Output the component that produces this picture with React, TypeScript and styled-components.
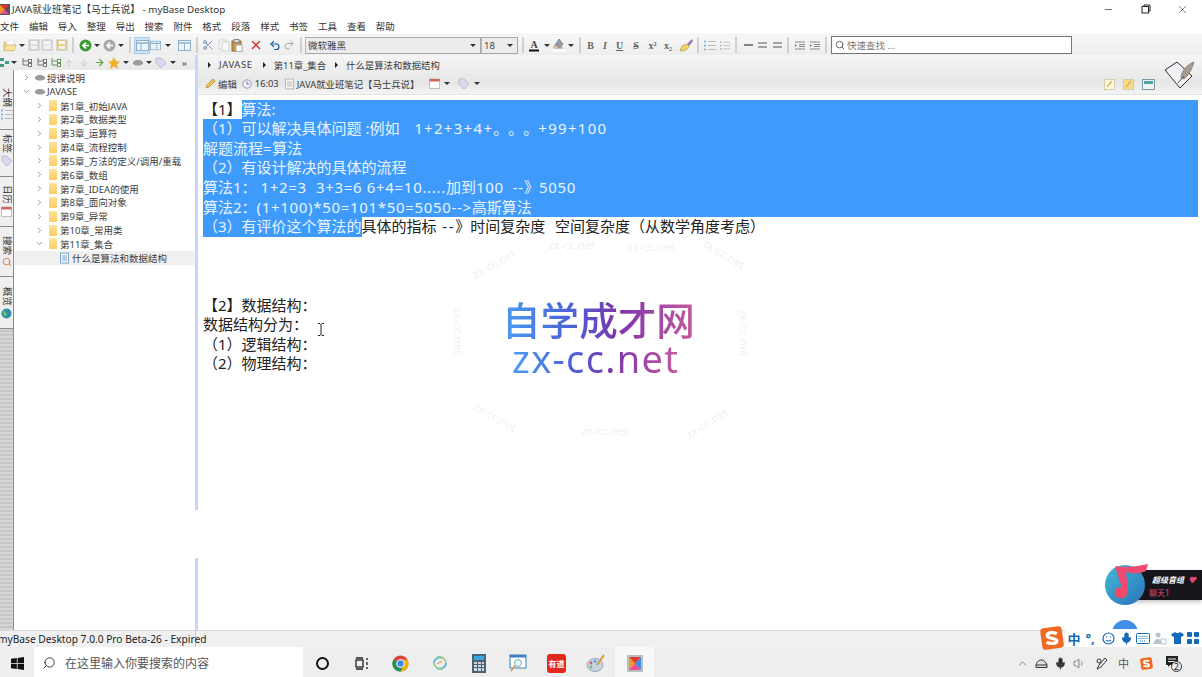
import React from 'react';
import styled, { createGlobalStyle } from 'styled-components';
import { Search, Scissors, Undo2, Redo2, Minus, X, ChevronRight, ChevronDown, ChevronUp, Mic, Volume1, ArrowUp, ArrowDown, ArrowRight } from 'lucide-react';

const GlobalStyle = createGlobalStyle`
  html, body, #root {
    margin: 0;
    width: 1202px;
    height: 677px;
    overflow: hidden;
  }
  body {
    background: #fff;
    font-family: "Noto Sans", "Noto Sans CJK SC", sans-serif;
    color: #333;
    text-spacing-trim: space-all;
  }
`;

const Shell = styled.div`
  position: relative;
  display: flex;
  flex-direction: column;
  width: 1202px;
  height: 677px;
  overflow: hidden;
`;

/* title + menu */
const TitleBar = styled.div`
  display: flex;
  align-items: center;
  height: 18px;
  background: #fff;
  font-size: 9.8px;
  color: #333;
`;
const TitleIcon = styled.svg`
  width: 11px;
  height: 11px;
  margin: 0 2px 0 -1px;
  flex: none;
`;
const TitleText = styled.span`
  flex: 1;
  white-space: pre;
`;
const WinButtons = styled.div`
  display: flex;
  align-items: center;
  padding-right: 1px;
`;
const WinButton = styled.div`
  display: flex;
  justify-content: center;
  align-items: center;
  width: 37px;
  color: #222;
`;
const MenuBar = styled.div`
  display: flex;
  gap: 9.9px;
  height: 16px;
  align-items: center;
  background: #fff;
  font-size: 9.5px;
  color: #333;
`;

/* main toolbar */
const ToolBar = styled.div`
  display: flex;
  align-items: center;
  height: 21px;
  padding-left: 3px;
  background: linear-gradient(#f7f7f7, #ededed);
  border-top: 1px solid #f0f0f0;
  box-sizing: border-box;
`;
const Tool = styled.div<{ $w: number; $active?: boolean }>`
  display: flex;
  justify-content: center;
  align-items: center;
  flex: none;
  width: ${(p) => p.$w}px;
  height: 17px;
  box-sizing: border-box;
  font-family: "Liberation Serif", serif;
  font-size: 10px;
  font-weight: 700;
  color: #666;
  ${(p) => p.$active && 'background: #cfe3f7; border: 1px solid #a9c9e8;'}
`;
const Drop = styled.i`
  width: 0;
  height: 0;
  border-left: 3px solid transparent;
  border-right: 3px solid transparent;
  border-top: 3px solid #333;
`;
const Dots = styled.div<{ $w: number }>`
  flex: none;
  width: ${(p) => p.$w}px;
  height: 16px;
  background: radial-gradient(circle at center, #aaa 0.6px, transparent 0.8px) center top / 2px 2px repeat-y;
`;
const Picker = styled.div<{ $w: number }>`
  display: flex;
  align-items: center;
  justify-content: space-between;
  flex: none;
  width: ${(p) => p.$w}px;
  height: 17px;
  padding: 0 4px 0 2px;
  box-sizing: border-box;
  background: #ececec;
  border: 1px solid #aaa;
  border-left-color: #b8b8b8;
  font-size: 9.5px;
  color: #444;
`;
const FindBox = styled.div`
  display: flex;
  align-items: center;
  gap: 2px;
  width: 241px;
  height: 18px;
  margin-left: 1px;
  padding-left: 3px;
  box-sizing: border-box;
  background: #fff;
  border: 1px solid #777;
  font-size: 9.5px;
  color: #777;
`;

/* main area */
const Main = styled.div`
  display: flex;
  flex: 1;
  min-height: 0;
`;
const LeftPane = styled.div`
  display: flex;
  flex-direction: column;
  width: 195px;
  flex: none;
`;
const TreeBar = styled.div`
  display: flex;
  align-items: center;
  height: 15px;
  background: linear-gradient(#f1f1f1, #e9e9e9);
`;
const LeftBody = styled.div`
  display: flex;
  flex: 1;
  min-height: 0;
`;
const Rail = styled.div`
  display: flex;
  flex-direction: column;
  width: 13px;
  flex: none;
  border-right: 1px solid #8c8c8c;
  background: repeating-linear-gradient(#c6c6c6 0 2px, #d6d6d6 2px 4px);
`;
const RailTab = styled.div<{ $h: number }>`
  display: flex;
  flex-direction: column;
  align-items: center;
  justify-content: flex-end;
  gap: 2px;
  height: ${(p) => p.$h}px;
  padding-bottom: 9px;
  box-sizing: border-box;
  background: #efefef;
  border-bottom: 1px solid #8c8c8c;
  font-size: 9.5px;
  line-height: 12px;
  color: #333;
`;
const RailLabel = styled.span`
  writing-mode: vertical-rl;
  text-orientation: sideways;
  white-space: pre;
`;
const Tree = styled.div`
  flex: 1;
  background: #fff;
  padding-top: 1px;
`;
const TreeRow = styled.div<{ $pad: number; $selected?: boolean }>`
  display: flex;
  align-items: center;
  height: 13.83px;
  padding-left: ${(p) => p.$pad}px;
  font-size: 9.5px;
  white-space: pre;
  color: #3c3c3c;
  background: ${(p) => (p.$selected ? '#f0f0f0' : 'transparent')};
`;
const Arrow = styled.span`
  display: flex;
  justify-content: center;
  width: 11px;
  flex: none;
  color: #777;
`;
const RowIcon = styled.span`
  display: flex;
  justify-content: center;
  width: 13px;
  margin: 0 1px 0 1px;
  flex: none;
`;
const Folder = styled.i`
  width: 8px;
  height: 11px;
  background: linear-gradient(#fde49a, #fbcd62);
  border-radius: 1px;
`;
const Splitter = styled.div`
  width: 3px;
  flex: none;
  background: linear-gradient(#c6d6fa 0 455px, #fff 455px 503px, #c6d6fa 503px);
`;

/* editor */
const EditorPane = styled.div`
  display: flex;
  flex-direction: column;
  flex: 1;
  min-width: 0;
`;
const EditorHead = styled.div`
  position: relative;
  height: 39px;
  flex: none;
  background: linear-gradient(#f6f6f6, #e6e6e6 70%, #f4f4f4);
  border-bottom: 1px solid #e2e2e2;
  font-size: 9.4px;
  color: #3a3a3a;
`;
const HeadRow = styled.div`
  display: flex;
  align-items: center;
  height: 19px;
  white-space: pre;
`;
const CrumbMark = styled.i<{ $left: number }>`
  width: 0;
  height: 0;
  margin-left: ${(p) => p.$left}px;
  margin-right: 8px;
  border-top: 3px solid transparent;
  border-bottom: 3px solid transparent;
  border-left: 3px solid #222;
`;
const CrumbWide = styled.span`
  letter-spacing: 0.65px;
`;
const HeadIcon = styled.span<{ $left: number; $right?: number }>`
  display: flex;
  margin-left: ${(p) => p.$left}px;
  margin-right: ${(p) => p.$right ?? 0}px;
`;
const HeadTools = styled.div`
  position: absolute;
  right: 6px;
  top: 5px;
  display: flex;
  align-items: flex-end;
  gap: 7px;
`;
const QuillSlot = styled.span`
  display: flex;
  margin-left: 2px;
`;
const Sheet = styled.div`
  position: relative;
  flex: 1;
  padding: 4.6px 4px 0 5px;
  background: #fff;
  font-size: 15px;
  line-height: 18.4px;
  color: #222;
`;
const Line = styled.div`
  display: flex;
  height: 19.6px;
  white-space: pre;
`;
const Picked = styled.span<{ $fill?: boolean }>`
  background: #3f9bfb;
  color: #e8f3ff;
  ${(p) => p.$fill && 'flex: 1;'}
`;
const Lat = styled.span<{ $s?: number }>`
  letter-spacing: ${(p) => p.$s ?? 0.68}px;
`;
const Mark = styled.span<{ $x: number; $y: number; $r: number }>`
  position: absolute;
  left: ${(p) => p.$x}px;
  top: ${(p) => p.$y}px;
  transform: translate(-50%, -50%) rotate(${(p) => p.$r}deg);
  font-size: 11.5px;
  line-height: 14px;
  color: #f1f1f1;
  white-space: pre;
`;
const BrandCn = styled.div`
  position: absolute;
  left: 304px;
  top: 206px;
  font-size: 38.6px;
  font-weight: 500;
  line-height: 39px;
  white-space: pre;
  color: transparent;
  background: linear-gradient(90deg, #4a9df0 0%, #4a63d8 35%, #7d35ad 60%, #c45a9e 100%);
  -webkit-background-clip: text;
  background-clip: text;
`;
const BrandEn = styled(BrandCn)`
  left: 314px;
  top: 245px;
  font-family: "Noto Sans", sans-serif;
  font-size: 38px;
  font-weight: 400;
  line-height: 36px;
  letter-spacing: 1.3px;
`;
const TextCursor = styled.svg`
  position: absolute;
  left: 120px;
  top: 228px;
`;

/* status + taskbar */
const StatusBar = styled.div`
  height: 17px;
  flex: none;
  display: flex;
  align-items: center;
  background: #f0f0f0;
  border-top: 1px solid #d8d8d8;
  box-sizing: border-box;
`;
const StatusText = styled.div`
  width: 197px;
  margin-left: -2px;
  flex: none;
  font-size: 10.2px;
  line-height: 16px;
  white-space: pre;
  color: #222;
  border-right: 1px solid #c8c8c8;
`;
const TaskBar = styled.div`
  display: flex;
  align-items: center;
  height: 30px;
  flex: none;
  padding-top: 2px;
  box-sizing: border-box;
  background: #eeeeee;
`;
const StartBtn = styled.div`
  display: flex;
  justify-content: center;
  align-items: center;
  width: 34px;
  flex: none;
`;
const TaskSearch = styled.div`
  display: flex;
  align-items: center;
  gap: 9px;
  width: 269px;
  height: 30px;
  margin-top: -2px;
  padding: 2px 0 0 8px;
  box-sizing: border-box;
  flex: none;
  background: #fff;
  font-size: 12px;
  color: #555;
`;
const SearchGlass = styled.span`
  display: flex;
  transform: scaleX(-1);
`;
const TaskApps = styled.div`
  display: flex;
  flex: none;
`;
const TaskApp = styled.div<{ $active?: boolean }>`
  display: flex;
  justify-content: center;
  align-items: center;
  width: 39px;
  height: 30px;
  margin-top: -2px;
  padding-top: 2px;
  box-sizing: border-box;
  background: ${(p) => (p.$active ? '#f8f8f8' : 'transparent')};
`;
const Tray = styled.div`
  display: flex;
  align-items: center;
  margin-left: auto;
  padding-right: 13px;
  color: #333;
`;
const TraySlot = styled.div<{ $w: number }>`
  display: flex;
  justify-content: center;
  align-items: center;
  width: ${(p) => p.$w}px;
  font-size: 11px;
  color: #555;
`;

/* things lying over the window */
const ImeBar = styled.div`
  position: absolute;
  right: 0;
  top: 629px;
  display: flex;
  align-items: center;
  width: 137px;
  height: 18px;
  background: #fff;
  color: #1668b8;
  font-size: 13px;
  font-weight: 700;
`;
const ImeSlot = styled.div<{ $w: number }>`
  display: flex;
  justify-content: center;
  align-items: center;
  width: ${(p) => p.$w}px;
  flex: none;
`;
const ImeLogo = styled.svg`
  position: absolute;
  left: -25px;
  top: -3px;
`;
const Pill = styled.div`
  position: absolute;
  left: 1125px;
  top: 570px;
  width: 77px;
  height: 30px;
  padding: 3px 0 0 24px;
  box-sizing: border-box;
  background: #15151b;
  border-radius: 6px 0 0 6px;
  box-shadow: 0 2px 4px rgba(0, 0, 0, 0.25);
  font-size: 8px;
  line-height: 13px;
  white-space: pre;
`;
const PillTitle = styled.div`
  display: flex;
  gap: 4px;
  padding-left: 3px;
  color: #fff;
  font-style: italic;
  font-weight: 700;
`;
const PillHeart = styled.span`
  color: #e0496e;
`;
const PillSub = styled.div`
  color: #e0496e;
`;
const MusicDisc = styled.svg`
  position: absolute;
  left: 1103px;
  top: 562px;
`;
const BlueDot = styled.div`
  position: absolute;
  left: 1112px;
  top: 620px;
  width: 26px;
  height: 26px;
  border-radius: 50%;
  background: #3f8fe8;
`;

/* small drawings */
const DocIcon = ({ c = '#b9b9b9' }: { c?: string }) => (
  <svg width="11" height="12" viewBox="0 0 11 12">
    <rect x="1.5" y="1" width="8" height="10" fill="#f4f4f4" stroke={c} />
    <path d="M3 4h5M3 6h5M3 8h5" stroke={c} />
  </svg>
);
const FolderOpen = () => (
  <svg width="15" height="14" viewBox="0 0 15 14">
    <path d="M1 4h5l1 1h4v8H1z" fill="#f5d27e" stroke="#d8bb78" />
    <path d="M4 3l5-2 3 2v5H4z" fill="#fff" stroke="#ddd" />
    <path d="M1 13l2-6h11l-2 6z" fill="#fbe3a3" stroke="#d8bb78" />
  </svg>
);
const Disk = ({ tint = '#dcdcdc' }: { tint?: string }) => (
  <svg width="12" height="12" viewBox="0 0 12 12">
    <rect x="1" y="1" width="10" height="10" fill={tint} stroke="#c0c0c0" />
    <rect x="3" y="2" width="6" height="3" fill="#f6f6f6" />
    <rect x="3" y="7" width="6" height="3" fill="#f3f3f3" />
  </svg>
);
const RoundArrow = ({ c }: { c: string }) => (
  <svg width="13" height="13" viewBox="0 0 13 13">
    <circle cx="6.5" cy="6.5" r="6" fill={c} />
    <path d="M10 6.5H5M7 3.7L4 6.5l3 2.8" fill="none" stroke="#fff" strokeWidth="1.6" />
  </svg>
);
const Panes = ({ v }: { v: number }) => (
  <svg width="13" height="11" viewBox="0 0 13 11">
    <rect x="0.5" y="0.5" width="12" height="10" fill="#eef5fb" stroke="#8fb0c9" />
    <path d="M.5 3h12" stroke="#8fb0c9" strokeWidth="1.5" />
    <path d={`M${v} 3v7`} stroke="#8fb0c9" />
  </svg>
);
const CopySheets = () => (
  <svg width="12" height="13" viewBox="0 0 12 13">
    <rect x="1" y="1" width="7" height="9" fill="#fafafa" stroke="#d0d0d0" />
    <rect x="4" y="3" width="7" height="9" fill="#fafafa" stroke="#d0d0d0" />
  </svg>
);
const Paste = () => (
  <svg width="12" height="13" viewBox="0 0 12 13">
    <rect x="1" y="2" width="9" height="10" fill="#c9964a" stroke="#8d6a35" />
    <rect x="3" y="0.5" width="5" height="3" fill="#ddd" stroke="#888" />
    <rect x="5" y="6" width="6" height="6.5" fill="#fff" stroke="#aaa" />
  </svg>
);
const Bucket = () => (
  <svg width="12" height="14" viewBox="0 0 12 14">
    <path d="M6 1l4 5-3 4-5-3z" fill="#9b9bb0" stroke="#666" strokeWidth=".6" />
    <path d="M2 7c-1 1-1 2-1 3h9" fill="none" stroke="#b86" />
    <rect y="11" width="12" height="3" fill="#fff" />
  </svg>
);
const Brush = () => (
  <svg width="15" height="14" viewBox="0 0 15 14">
    <path d="M13 1L8 6l2 2 4-5z" fill="#8a7ab0" />
    <path d="M8 6L3 8l-2 5c4 0 8-1 9-5z" fill="#f1d470" stroke="#a68c35" strokeWidth=".6" />
  </svg>
);
const ListLines = ({ dots }: { dots?: boolean }) => (
  <svg width="12" height="11" viewBox="0 0 12 11">
    <path d="M4 1.5h8M4 5.5h8M4 9.5h8" stroke="#bbb" />
    <path d="M1 .5v2M1 4.500v2M1 8.500v2" stroke={dots ? '#8ab' : '#6a9fd0'} strokeWidth="1.4" />
  </svg>
);
const Bars = ({ n }: { n: number }) => (
  <svg width="11" height="8" viewBox="0 0 11 8">
    {n === 1 ? <path d="M1 4h9" stroke="#555" strokeWidth="1.4" /> : <path d="M1 2h9M1 6h9" stroke="#555" strokeWidth="1.2" />}
  </svg>
);
const Indent = () => (
  <svg width="10" height="9" viewBox="0 0 10 9">
    <path d="M0 1h10M4 3.500h6M4 5.500h6M0 8h10" stroke="#888" />
    <path d="M0 3l2 1.500L0 6z" fill="#777" />
  </svg>
);
const Hier = ({ c }: { c: string }) => (
  <svg width="11" height="11" viewBox="0 0 11 11" fill="none" stroke={c}>
    <path d="M2 1v7h6M2 4h6" />
    <rect x="7.500" y="2.500" width="3" height="3" fill="#fff" />
    <rect x="7.500" y="6.500" width="3" height="3" fill="#fff" />
  </svg>
);
const TreeGrid = () => (
  <svg width="9" height="11" viewBox="0 0 9 11">
    <path d="M0 1h4v3H0zM5 4h4v3H5zM0 7h4v3H0z" fill="#3e9a8c" />
  </svg>
);
const Pencil = () => (
  <svg width="11" height="11" viewBox="0 0 11 11">
    <path d="M1 10l1-3 6-6 2 2-6 6z" fill="#eec34e" stroke="#a5852c" strokeWidth=".7" />
  </svg>
);
const Clock = () => (
  <svg width="10" height="10" viewBox="0 0 10 10">
    <circle cx="5" cy="5" r="4.200" fill="#eef" stroke="#99a" />
    <path d="M5 2.500V5h2" fill="none" stroke="#667" strokeWidth=".8" />
  </svg>
);
const Calendar = () => (
  <svg width="11" height="11" viewBox="0 0 11 11">
    <rect x=".5" y="1" width="10" height="9.500" fill="#fff" stroke="#c9bdb4" />
    <rect x=".5" y="1" width="10" height="2.500" fill="#c9675f" />
  </svg>
);
const TagIcon = () => (
  <svg width="12" height="12" viewBox="0 0 12 12">
    <path d="M1 1h5l5 5-5 5-5-5z" fill="#dcd6ef" stroke="#bdb8d4" />
  </svg>
);
const MiniNote = ({ c }: { c: string }) => (
  <svg width="12" height="11" viewBox="0 0 12 11">
    <rect x=".5" y=".5" width="10" height="10" fill={c} stroke="#d4cdb0" />
    <path d="M3 8l5-6" stroke="#d8b050" strokeWidth="1.2" />
  </svg>
);
const MiniPanel = () => (
  <svg width="13" height="11" viewBox="0 0 13 11">
    <rect x=".5" y=".5" width="12" height="10" fill="#eaf3f2" stroke="#7a9aa5" />
    <rect x="2" y="2" width="9" height="3" fill="#4ea5a0" />
  </svg>
);
const QuillBook = () => (
  <svg width="32" height="30" viewBox="0 0 32 30">
    <path d="M1 10L13 2l15 14-12 12z" fill="#f0f2f5" stroke="#333" strokeWidth="1" />
    <path d="M17 18c0-6 5-13 13-16-2 7-5 13-10 17z" fill="#a89c90" stroke="#6d635a" strokeWidth=".6" />
    <path d="M14 23l6-7" stroke="#555" />
  </svg>
);
const Drive = () => (
  <svg width="10" height="7" viewBox="0 0 10 7">
    <path d="M0 3l3-2h4l3 2v2l-3 1.500H3L0 5z" fill="#9a9a9a" />
  </svg>
);
const WinLogo = () => (
  <svg width="13" height="13" viewBox="0 0 13 13">
    <path d="M0 1.800L5.800 1v5.200H0zM6.600.900L13 0v6.200H6.600zM0 7h5.800v5.100L0 11.300zM6.600 7H13v6l-6.400-.9z" fill="#111" />
  </svg>
);
const Chrome = () => (
  <svg width="17" height="17" viewBox="0 0 32 32">
    <circle cx="16" cy="16" r="15" fill="#db4437" />
    <path d="M16 16L3 24a15 15 0 0 1-.5-15z" fill="#0f9d58" />
    <path d="M3 24a15 15 0 0 0 13 7l7-13z" fill="#0f9d58" />
    <path d="M16 31a15 15 0 0 0 13-22H16l7 9z" fill="#f4b400" />
    <circle cx="16" cy="16" r="7" fill="#4285f4" stroke="#fff" strokeWidth="2" />
  </svg>
);
const Swirl = () => (
  <svg width="18" height="18" viewBox="0 0 18 18" fill="none">
    <path d="M3 9c0-4 5-7 9-5M15 9c0 4-5 7-9 5" stroke="#5fb8d9" strokeWidth="1.800" />
    <path d="M6 3c4-1 9 2 9 6M12 15c-4 1-9-2-9-6" stroke="#8cc56f" strokeWidth="1.200" />
    <path d="M6 10l5-3" stroke="#e8a060" strokeWidth="1.200" />
  </svg>
);
const Calc = () => (
  <svg width="14" height="19" viewBox="0 0 14 19">
    <rect width="14" height="19" fill="#4d6272" />
    <rect x="2" y="2" width="10" height="4" fill="#39a7e0" />
    <path d="M2 8h3v2H2zM6 8h3v2H6zM10 8h2v2h-2zM2 11h3v2H2zM6 11h3v2H6zM10 11h2v2h-2zM2 14h3v3H2zM6 14h3v3H6zM10 14h2v3h-2z" fill="#cfd8de" />
  </svg>
);
const Lens = () => (
  <svg width="18" height="18" viewBox="0 0 18 18">
    <rect x="1" y="1" width="16" height="13" fill="#fff" stroke="#3f7fc2" />
    <rect x="1" y="1" width="16" height="2.500" fill="#3f7fc2" />
    <circle cx="9" cy="9" r="3.500" fill="#dff" stroke="#8a9" />
    <path d="M6 11.500L2 17" stroke="#c7a070" strokeWidth="1.800" />
  </svg>
);
const Youdao = () => (
  <svg width="19" height="19" viewBox="0 0 19 19">
    <rect width="19" height="19" rx="3" fill="#e5281f" />
    <text x="9.500" y="13" textAnchor="middle" fontSize="8" fontWeight="700" fill="#fff" fontFamily="Noto Sans CJK SC, sans-serif">有道</text>
  </svg>
);
const Palette = () => (
  <svg width="20" height="19" viewBox="0 0 20 19">
    <ellipse cx="9" cy="11" rx="8" ry="6.500" fill="#c8d3e2" stroke="#98a7ba" />
    <circle cx="5" cy="9" r="1.400" fill="#e05a5a" />
    <circle cx="9" cy="7.500" r="1.400" fill="#5aa0e0" />
    <circle cx="5" cy="13" r="1.400" fill="#6cc06c" />
    <path d="M18 1L11 11" stroke="#d89a3a" strokeWidth="2" />
  </svg>
);
const XMind = () => (
  <svg width="16" height="17" viewBox="0 0 16 17">
    <rect width="16" height="17" fill="#bdbdc4" />
    <path d="M2 2h12L8 8.500z" fill="#e5352e" />
    <path d="M2 2v13l6-6.500z" fill="#f59a23" />
    <path d="M14 2v13L8 8.500z" fill="#3f8fe0" />
    <path d="M2 15h12L8 8.500z" fill="#ea4f9e" />
  </svg>
);
const TaskView = () => (
  <svg width="14" height="13" viewBox="0 0 14 13" fill="none" stroke="#222" strokeWidth="1.300">
    <rect x="1" y="3" width="7" height="7" />
    <path d="M1 1h7M1 12h7M12 1v2M12 5v3M12 10v2" />
  </svg>
);
const Orange = ({ s }: { s: number }) => (
  <svg width={s} height={s} viewBox="0 0 20 20">
    <rect x="1" y="1" width="18" height="18" rx="3" fill="#f26a21" transform="rotate(-8 10 10)" />
    <path d="M14 6.500C12 5 6 5 6 8c0 3 8 1.500 8 4.500 0 2.500-6 2.500-8.500 1" fill="none" stroke="#fff" strokeWidth="2.800" />
  </svg>
);
const Smile = () => (
  <svg width="13" height="13" viewBox="0 0 13 13" fill="none" stroke="#1668b8" strokeWidth="1.200">
    <circle cx="6.500" cy="6.500" r="5.500" />
    <path d="M4 8c1 1.300 4 1.300 5 0M4.500 4.500v1M8.500 4.500v1" />
  </svg>
);
const Keyboard = () => (
  <svg width="14" height="11" viewBox="0 0 14 11" fill="none" stroke="#1668b8">
    <rect x=".5" y=".5" width="13" height="10" rx="1" />
    <path d="M2.500 3.500h9M2.500 5.500h9M4 8h6" strokeDasharray="1 1" />
  </svg>
);
const Person = () => (
  <svg width="14" height="13" viewBox="0 0 14 13">
    <circle cx="5" cy="3" r="2.500" fill="#b9c3cc" />
    <path d="M1 12c0-4 2-5 4-5s3 1 3 2v3z" fill="#b9c3cc" />
    <rect x="8" y="7" width="5" height="5" fill="#fff" stroke="#b9c3cc" />
  </svg>
);
const Shirt = () => (
  <svg width="13" height="12" viewBox="0 0 13 12">
    <path d="M4 0L0 2.500 2 5l1-.5V12h7V4.500L11 5l2-2.500L9 0c-1 1.500-4 1.500-5 0z" fill="#1668b8" />
  </svg>
);
const Grid = () => (
  <svg width="12" height="12" viewBox="0 0 12 12" fill="#1668b8">
    <rect width="5" height="5" rx="1" />
    <rect x="7" width="5" height="5" rx="1" />
    <rect y="7" width="5" height="5" rx="1" />
    <rect x="7" y="7" width="5" height="5" rx="1" />
  </svg>
);
const Cloud = () => (
  <svg width="13" height="9" viewBox="0 0 13 9" fill="none" stroke="#333">
    <path d="M1 8.500V6c1-4 4-5.500 6-5s4 2 5 5v2.500z" fill="#ddd" />
    <path d="M1 6h11" />
  </svg>
);
const Pen = () => (
  <svg width="14" height="14" viewBox="0 0 14 14" fill="none" stroke="#333">
    <path d="M2 13l2-4 6-7 2 2-6 7z" />
    <circle cx="4" cy="5" r="2" />
  </svg>
);
const Bell = () => (
  <svg width="17" height="17" viewBox="0 0 17 17">
    <path d="M1 1h12v9H5l-2 2v-2H1z" fill="#222" />
    <path d="M3 4h8M3 6.500h8" stroke="#eee" />
    <circle cx="11.500" cy="11.500" r="5" fill="#eee" stroke="#333" />
    <text x="11.500" y="14.500" textAnchor="middle" fontSize="8.500" fill="#111" fontFamily="Noto Sans, sans-serif">2</text>
  </svg>
);

const chapters = [
  '第1章_初始JAVA',
  '第2章_数据类型',
  '第3章_运算符',
  '第4章_流程控制',
  '第5章_方法的定义/调用/重载',
  '第6章_数组',
  '第7章_IDEA的使用',
  '第8章_面向对象',
  '第9章_异常',
  '第10章_常用类',
];

const watermarks = [
  { x: 374, y: 150, r: 0 },
  { x: 453, y: 152, r: 0 },
  { x: 296, y: 169, r: -30 },
  { x: 526, y: 159, r: 32 },
  { x: 260, y: 236, r: 90 },
  { x: 546, y: 238, r: 90 },
  { x: 297, y: 322, r: 30 },
  { x: 407, y: 336, r: 0 },
  { x: 509, y: 328, r: -32 },
];

const menuItems = ['文件', '编辑', '导入', '整理', '导出', '搜索', '附件', '格式', '段落', '样式', '书签', '工具', '查看', '帮助'];

const railTabs = [
  { h: 60, label: '大纲', icon: <ListLines /> },
  { h: 47, label: '标签', icon: <TagIcon /> },
  { h: 50, label: '日历', icon: <Calendar /> },
  { h: 50, label: '搜索', icon: <Search size={10} color="#c86a3a" /> },
  { h: 52, label: '概览', icon: <svg width="11" height="11" viewBox="0 0 11 11"><circle cx="5.500" cy="5.500" r="5" fill="#2f8fa8" /><path d="M2 3l3 1 1 3-3 1z" fill="#7cc06c" /></svg> },
];

export default function App() {
  return (
    <Shell>
      <GlobalStyle />
      <TitleBar>
        <TitleIcon viewBox="0 0 11 11">
          <rect width="11" height="11" fill="#555" />
          <path d="M1 1h9L5.500 5.500z" fill="#e5352e" />
          <path d="M1 10h9L5.500 5.500z" fill="#ea4f9e" />
          <path d="M1 1v9l4.500-4.500z" fill="#f59a23" />
        </TitleIcon>
        <TitleText>JAVA就业班笔记【马士兵说】 - myBase Desktop</TitleText>
        <WinButtons>
          <WinButton><Minus size={11} strokeWidth={1.4} /></WinButton>
          <WinButton>
            <svg width="10" height="10" viewBox="0 0 10 10" fill="none" stroke="#222">
              <rect x="1" y="2.500" width="6.500" height="6.500" />
              <path d="M3 2V1h6v6H8" />
            </svg>
          </WinButton>
          <WinButton><X size={13} strokeWidth={1} /></WinButton>
        </WinButtons>
      </TitleBar>
      <MenuBar>
        {menuItems.map((m) => <span key={m}>{m}</span>)}
      </MenuBar>
      <ToolBar>
        <Tool $w={14}><FolderOpen /></Tool>
        <Tool $w={10}><Drop /></Tool>
        <Tool $w={13}><Disk /></Tool>
        <Tool $w={14}><Disk tint="#e6e6e6" /></Tool>
        <Tool $w={15}><Disk tint="#f1cf7c" /></Tool>
        <Dots $w={8} />
        <Tool $w={16}><RoundArrow c="#3d9b35" /></Tool>
        <Tool $w={8}><Drop /></Tool>
        <Tool $w={16}><RoundArrow c="#a9a9a9" /></Tool>
        <Tool $w={8}><Drop /></Tool>
        <Dots $w={9} />
        <Tool $w={16} $active><Panes v={5} /></Tool>
        <Tool $w={11}><Panes v={8} /></Tool>
        <Tool $w={13}><Drop /></Tool>
        <Tool $w={20}><Panes v={6.500} /></Tool>
        <Dots $w={5} />
        <Tool $w={18}><Scissors size={12} color="#7f92b8" /></Tool>
        <Tool $w={13}><CopySheets /></Tool>
        <Tool $w={13}><Paste /></Tool>
        <Tool $w={26}><X size={14} color="#d0342c" strokeWidth={2.6} /></Tool>
        <Tool $w={12}><Undo2 size={13} color="#1f5fb0" strokeWidth={2.400} /></Tool>
        <Tool $w={16}><Redo2 size={12} color="#a8a8a8" /></Tool>
        <Dots $w={8} />
        <Picker $w={176}><span>微软雅黑</span><Drop /></Picker>
        <Picker $w={37}><span>18</span><Drop /></Picker>
        <Dots $w={10} />
        <Tool $w={12}>
          <svg width="10" height="13" viewBox="0 0 10 13">
            <text x="5" y="9" textAnchor="middle" fontSize="10" fill="#444" fontFamily="Liberation Serif, serif">A</text>
            <rect y="10.500" width="10" height="2" fill="#111" />
          </svg>
        </Tool>
        <Tool $w={13}><Drop /></Tool>
        <Tool $w={12}><Bucket /></Tool>
        <Tool $w={12}><Drop /></Tool>
        <Dots $w={6} />
        <Tool $w={15}>B</Tool>
        <Tool $w={14}><em>I</em></Tool>
        <Tool $w={15}><u>U</u></Tool>
        <Tool $w={18}><s>S</s></Tool>
        <Tool $w={15}>x²</Tool>
        <Tool $w={16}>x₂</Tool>
        <Tool $w={20}><Brush /></Tool>
        <Dots $w={4} />
        <Tool $w={20}><ListLines /></Tool>
        <Tool $w={10}><ListLines dots /></Tool>
        <Dots $w={12} />
        <Tool $w={12}><Bars n={1} /></Tool>
        <Tool $w={16}><Bars n={2} /></Tool>
        <Tool $w={14}><Bars n={2} /></Tool>
        <Dots $w={8} />
        <Tool $w={16}><Indent /></Tool>
        <Tool $w={14}><Indent /></Tool>
        <Dots $w={8} />
        <FindBox><Search size={10} color="#666" strokeWidth={2.400} />快速查找 ...</FindBox>
      </ToolBar>
      <Main>
        <LeftPane>
          <TreeBar>
            <Tool $w={9}><TreeGrid /></Tool>
            <Tool $w={10}><Drop /></Tool>
            <Tool $w={14}><Hier c="#777" /></Tool>
            <Tool $w={16}><Hier c="#777" /></Tool>
            <Tool $w={12}><Hier c="#6a9a5a" /></Tool>
            <Tool $w={16}><ArrowUp size={10} color="#c4c4c4" /></Tool>
            <Tool $w={14}><ArrowDown size={10} color="#c4c4c4" /></Tool>
            <Tool $w={16}><ArrowRight size={11} color="#6aa84a" strokeWidth={2.600} /></Tool>
            <Tool $w={13}>
              <svg width="12" height="12" viewBox="0 0 12 12"><path d="M6 0l2 4 4 .5-3 3 1 4.500-4-2.500L2 12l1-4.500-3-3L4 4z" fill="#f0b030" /></svg>
            </Tool>
            <Tool $w={11}><Drop /></Tool>
            <Tool $w={13}><Drive /></Tool>
            <Tool $w={10}><Drop /></Tool>
            <Tool $w={14}><TagIcon /></Tool>
            <Tool $w={9}><Drop /></Tool>
            <Tool $w={15}>»</Tool>
          </TreeBar>
          <LeftBody>
            <Rail>
              {railTabs.map((t) => (
                <RailTab key={t.label} $h={t.h}>
                  <RailLabel>{t.label}</RailLabel>
                  {t.icon}
                </RailTab>
              ))}
            </Rail>
            <Tree>
              <TreeRow $pad={7}>
                <Arrow><ChevronRight size={9} /></Arrow>
                <RowIcon><Drive /></RowIcon>授课说明
              </TreeRow>
              <TreeRow $pad={7}>
                <Arrow><ChevronDown size={9} /></Arrow>
                <RowIcon><Drive /></RowIcon>JAVASE
              </TreeRow>
              {chapters.map((c) => (
                <TreeRow key={c} $pad={20}>
                  <Arrow><ChevronRight size={9} /></Arrow>
                  <RowIcon><Folder /></RowIcon>{c}
                </TreeRow>
              ))}
              <TreeRow $pad={20}>
                <Arrow><ChevronDown size={9} /></Arrow>
                <RowIcon><Folder /></RowIcon>第11章_集合
              </TreeRow>
              <TreeRow $pad={43} $selected>
                <RowIcon><DocIcon c="#7ba7d0" /></RowIcon>什么是算法和数据结构
              </TreeRow>
            </Tree>
          </LeftBody>
        </LeftPane>
        <Splitter />
        <EditorPane>
          <EditorHead>
            <HeadRow>
              <CrumbMark $left={10} /><CrumbWide>JAVASE</CrumbWide>
              <CrumbMark $left={10} />第11章_集合
              <CrumbMark $left={9} />什么是算法和数据结构
            </HeadRow>
            <HeadRow>
              <HeadIcon $left={7} $right={2}><Pencil /></HeadIcon>编辑
              <HeadIcon $left={5} $right={3}><Clock /></HeadIcon>16:03
              <HeadIcon $left={5} $right={2}><DocIcon /></HeadIcon>JAVA就业班笔记【马士兵说】
              <HeadIcon $left={10} $right={4}><Calendar /></HeadIcon><Drop />
              <HeadIcon $left={8} $right={4}><TagIcon /></HeadIcon><Drop />
            </HeadRow>
            <HeadTools>
              <MiniNote c="#fff8e0" />
              <MiniNote c="#f7d98a" />
              <MiniPanel />
              <QuillSlot><QuillBook /></QuillSlot>
            </HeadTools>
          </EditorHead>
          <Sheet>
            <Line>【1】<Picked $fill>算法:</Picked></Line>
            <Line><Picked $fill>（1）可以解决具体问题 :例如<Lat $s={1}>   </Lat><Lat $s={1.3}>1+2+3+4+</Lat>。。。<Lat $s={1.3}>+99+100</Lat></Picked></Line>
            <Line><Picked $fill>解题流程<Lat>=</Lat>算法</Picked></Line>
            <Line><Picked $fill>（2）有设计解决的具体的流程</Picked></Line>
            <Line><Picked $fill>算法1： <Lat>1+2=3  3+3=6 6+4=10.....</Lat>加到<Lat>100  --</Lat>》<Lat>5050</Lat></Picked></Line>
            <Line><Picked $fill>算法2：<Lat>(1+100)*50=101*50=5050--&gt;</Lat>高斯算法</Picked></Line>
            <Line><Picked>（3）有评价这个算法的</Picked>具体的指标<Lat $s={1.7}> --</Lat>》时间复杂度<Lat $s={1}>  </Lat>空间复杂度（从数学角度考虑）</Line>
            <Line />
            <Line />
            <Line />
            <Line>【2】数据结构：</Line>
            <Line>数据结构分为：</Line>
            <Line>（1）逻辑结构：</Line>
            <Line>（2）物理结构：</Line>
            {watermarks.map((w) => (
              <Mark key={`${w.x}-${w.y}`} $x={w.x} $y={w.y} $r={w.r}>zx-cc.net</Mark>
            ))}
            <BrandCn>自学成才网</BrandCn>
            <BrandEn>zx-cc.net</BrandEn>
            <TextCursor width="6" height="13" viewBox="0 0 6 13" fill="none" stroke="#222">
              <path d="M0 .5h2l1 1 1-1h2M3 1.500v10M0 12.500h2l1-1 1 1h2" />
            </TextCursor>
          </Sheet>
        </EditorPane>
      </Main>
      <StatusBar>
        <StatusText>myBase Desktop 7.0.0 Pro Beta-26 - Expired</StatusText>
      </StatusBar>
      <TaskBar>
        <StartBtn><WinLogo /></StartBtn>
        <TaskSearch>
          <SearchGlass><Search size={14} color="#222" strokeWidth={1.500} /></SearchGlass>
          在这里输入你要搜索的内容
        </TaskSearch>
        <TaskApps>
          <TaskApp>
            <svg width="15" height="15" viewBox="0 0 15 15" fill="none" stroke="#111" strokeWidth="2"><circle cx="7.500" cy="7.500" r="5.500" /></svg>
          </TaskApp>
          <TaskApp><TaskView /></TaskApp>
          <TaskApp><Chrome /></TaskApp>
          <TaskApp><Swirl /></TaskApp>
          <TaskApp><Calc /></TaskApp>
          <TaskApp><Lens /></TaskApp>
          <TaskApp><Youdao /></TaskApp>
          <TaskApp><Palette /></TaskApp>
          <TaskApp $active><XMind /></TaskApp>
        </TaskApps>
        <Tray>
          <TraySlot $w={19}><ChevronUp size={13} strokeWidth={1.300} /></TraySlot>
          <TraySlot $w={19}><Cloud /></TraySlot>
          <TraySlot $w={18}><Mic size={13} fill="#222" /></TraySlot>
          <TraySlot $w={21}><Volume1 size={13} strokeWidth={1.300} /></TraySlot>
          <TraySlot $w={23}><Pen /></TraySlot>
          <TraySlot $w={21}>中</TraySlot>
          <TraySlot $w={24}><Orange s={13} /></TraySlot>
          <TraySlot $w={31}><Bell /></TraySlot>
        </Tray>
      </TaskBar>
      <BlueDot />
      <ImeBar>
        <ImeLogo width="24" height="24" viewBox="0 0 20 20">
          <rect x="1" y="1" width="18" height="18" rx="3" fill="#f26a21" transform="rotate(-8 10 10)" />
          <path d="M14 6.500C12 5 6 5 6 8c0 3 8 1.500 8 4.500 0 2.500-6 2.500-8.500 1" fill="none" stroke="#fff" strokeWidth="2.800" />
        </ImeLogo>
        <ImeSlot $w={18}>中</ImeSlot>
        <ImeSlot $w={14}>°,</ImeSlot>
        <ImeSlot $w={22}><Smile /></ImeSlot>
        <ImeSlot $w={14}><Mic size={13} color="#1668b8" fill="#1668b8" /></ImeSlot>
        <ImeSlot $w={20}><Keyboard /></ImeSlot>
        <ImeSlot $w={14}><Person /></ImeSlot>
        <ImeSlot $w={20}><Shirt /></ImeSlot>
        <ImeSlot $w={12}><Grid /></ImeSlot>
      </ImeBar>
      <Pill>
        <PillTitle><span>超级音组</span><PillHeart>♥</PillHeart></PillTitle>
        <PillSub>聊天1</PillSub>
      </Pill>
      <MusicDisc width="46" height="44" viewBox="0 0 46 44">
        <defs>
          <linearGradient id="disc" x1="0" y1="0" x2="1" y2="1">
            <stop offset="0" stopColor="#43b8d8" />
            <stop offset="1" stopColor="#2a74b8" />
          </linearGradient>
        </defs>
        <circle cx="22" cy="23" r="20" fill="url(#disc)" />
        <path d="M12 4c8 2 20 1 33-2l-2 7c-6 3-14 3-20 1l2 19c0 6-5 8-9 7-5-1-6-8-2-10 2-1 4-1 5 0z" fill="#ef4b6e" />
      </MusicDisc>
    </Shell>
  );
}
